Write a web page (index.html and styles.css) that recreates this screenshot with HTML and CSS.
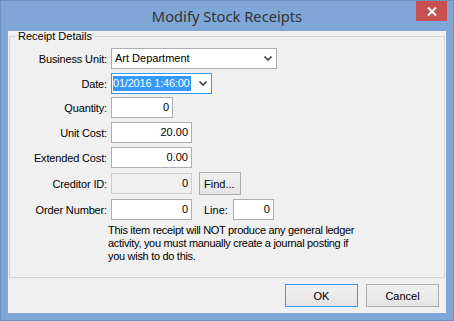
FILE: index.html
```html
<!DOCTYPE html>
<html lang="en">
<head>
    <meta charset="UTF-8">
    <title>Modify Stock Receipts</title>
    <link rel="stylesheet" href="styles.css">
</head>
<body>
    <div class="window">
        <div class="titlebar">
            <span class="title">Modify Stock Receipts</span>
            <div class="close">
                <svg width="10" height="9" viewBox="0 0 10 9"><path d="M1 0.5 L9 8.5 M9 0.5 L1 8.5" stroke="#fff" stroke-width="2"/></svg>
            </div>
        </div>

        <div class="client">
            <fieldset class="group">
                <legend>Receipt Details</legend>

                <div class="row">
                    <label>Business Unit:</label>
                    <div class="box combo w-unit">
                        <span class="value">Art Department</span>
                        <svg class="arrow" width="8" height="5" viewBox="0 0 8 5"><path d="M0.5 0.5 L4 4 L7.5 0.5" fill="none" stroke="#444" stroke-width="1.6"/></svg>
                    </div>
                </div>

                <div class="row">
                    <label>Date:</label>
                    <div class="box combo focus w-date">
                        <span class="sel">01/2016 1:46:00</span>
                        <svg class="arrow" width="8" height="5" viewBox="0 0 8 5"><path d="M0.5 0.5 L4 4 L7.5 0.5" fill="none" stroke="#444" stroke-width="1.6"/></svg>
                    </div>
                </div>

                <div class="row r-qty">
                    <label>Quantity:</label>
                    <div class="box num w-qty">0</div>
                </div>

                <div class="row r-cost">
                    <label>Unit Cost:</label>
                    <div class="box num w-cost">20.00</div>
                </div>

                <div class="row">
                    <label>Extended Cost:</label>
                    <div class="box num w-cost">0.00</div>
                </div>

                <div class="row r-creditor">
                    <label>Creditor ID:</label>
                    <div class="box num disabled w-cost">0</div>
                    <button class="btn find">Find...</button>
                </div>

                <div class="row">
                    <label>Order Number:</label>
                    <div class="box num w-cost">0</div>
                    <span class="line-label">Line:</span>
                    <div class="box num w-line">0</div>
                </div>

                <p class="note">This item receipt will NOT produce any general ledger<br>activity, you must manually create a journal posting if<br>you wish to do this.</p>
            </fieldset>

            <div class="buttons">
                <button class="btn default">OK</button>
                <button class="btn">Cancel</button>
            </div>
        </div>
    </div>
</body>
</html>
```

FILE: styles.css
```css
body {
    margin: 0;
    font-family: "Liberation Sans", Arial, sans-serif;
    font-size: 11px;
    color: #000;
}

.window {
    position: relative;
    width: 454px;
    height: 321px;
    box-sizing: border-box;
    background: #7fa6d6;
    border: 1px solid #6b8fbf;
    display: flex;
    flex-direction: column;
}

.titlebar {
    height: 30px;
    display: flex;
    align-items: center;
    justify-content: center;
}

.title {
    font-family: "Noto Sans", sans-serif;
    font-size: 14.7px;
    color: #333;
    margin-top: -1px;
}

.close {
    position: absolute; /* sits over the title bar */
    top: 0;
    right: 6px;
    width: 31px;
    height: 20px;
    background: #c75050;
    display: flex;
    align-items: center;
    justify-content: center;
}

.client {
    flex: 1;
    margin: 0 7px 7px;
    background: #f0f0f0;
    display: flex;
    flex-direction: column;
}

.group {
    margin: 0 1px 0 1px;
    padding: 6px 0 0 0;
    border: 1px solid #d5d5d5;
    height: 247px;
    box-sizing: border-box;
}

.group legend {
    margin-left: 6px;
    padding: 0 2px;
    line-height: 11px;
    font-size: 11px;
}

.row {
    display: flex;
    align-items: center;
    height: 21px;
    margin-bottom: 4px;
}

.row label {
    width: 97px;
    margin-right: 4px;
    text-align: right;
    letter-spacing: -0.15px;
}

.r-qty { margin-top: -1px; }
.r-cost { margin-top: 1px; }
.r-creditor { height: 23px; margin-top: 2px; margin-bottom: 4px; }

.box {
    height: 21px;
    box-sizing: border-box;
    border: 1px solid #abadb3;
    background: #fff;
    line-height: 19px;
    padding: 0 3px;
    white-space: nowrap;
    overflow: hidden;
}

.num {
    text-align: right;
}

.combo {
    display: flex;
    align-items: center;
    justify-content: space-between;
    padding-right: 4px;
}

.focus {
    border-color: #3399ff;
    padding-left: 1px;
}

.disabled {
    background: #f0f0f0;
    border-color: #cccccc;
}

.sel {
    background: #3399ff;
    color: #fff;
    line-height: 15px;
    padding-right: 1px;
    letter-spacing: -0.2px;
}

.arrow {
    flex: none;
}

.w-unit { width: 166px; }
.w-date { width: 101px; }
.w-qty { width: 62px; }
.w-cost { width: 81px; }
.w-line { width: 41px; }

.line-label {
    margin-left: 12px;
    margin-right: 5px;
}

.btn {
    font-family: "Liberation Sans", Arial, sans-serif;
    font-size: 11px;
    color: #000;
    background: linear-gradient(#f0f0f0, #e5e5e5);
    border: 1px solid #acacac;
    height: 23px;
    padding: 0;
}

.find {
    width: 42px;
    margin-left: 7px;
    text-align: left;
    padding-left: 4px;
}

.note {
    margin: 0 0 0 98px;
    line-height: 13px;
    letter-spacing: -0.3px;
}

.buttons {
    display: flex;
    justify-content: flex-end;
    gap: 8px;
    padding: 6px 7px 0 0;
}

.buttons .btn {
    width: 73px;
}

.default {
    border-color: #3399ff;
}
```
